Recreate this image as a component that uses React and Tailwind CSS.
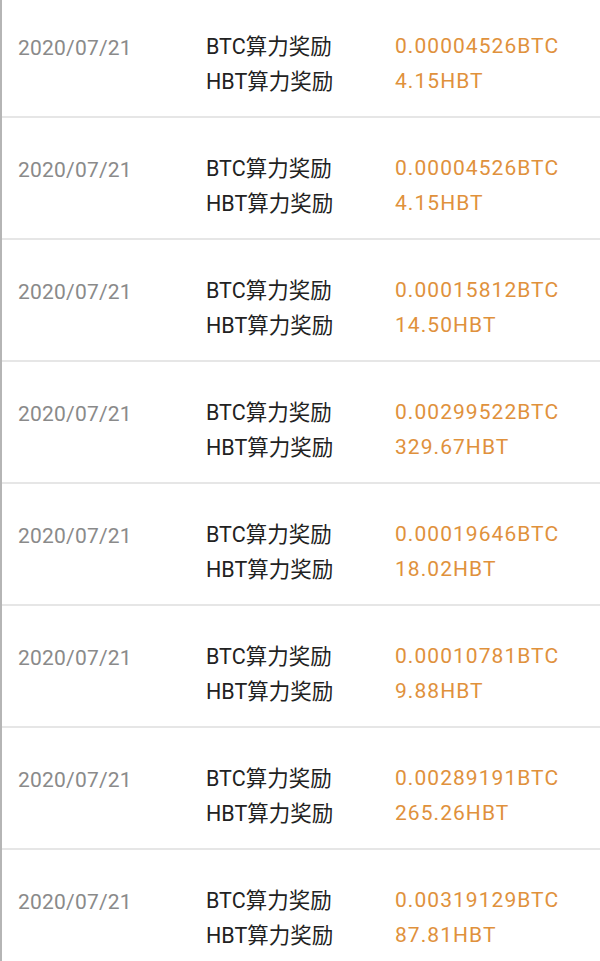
const rows = [
  ["0.00004526BTC", "4.15HBT"],
  ["0.00004526BTC", "4.15HBT"],
  ["0.00015812BTC", "14.50HBT"],
  ["0.00299522BTC", "329.67HBT"],
  ["0.00019646BTC", "18.02HBT"],
  ["0.00010781BTC", "9.88HBT"],
  ["0.00289191BTC", "265.26HBT"],
  ["0.00319129BTC", "87.81HBT"],
]

function Row({ btc, hbt }) {
  return (
    <div className="flex h-[122px] items-start border-b-2 border-[#e6e6e6] pt-[33px] pl-[16px]">
      <div className="w-[188px] pt-[2px] leading-[35px] tracking-[0.01em] text-[#8a8a8a]">2020/07/21</div>
      <div className="w-[189px] text-[21.5px] leading-[35px] text-[#222]">
        <div>BTC算力奖励</div>
        <div>HBT算力奖励</div>
      </div>
      <div className="leading-[35px] tracking-[0.05em] text-[#e0913c]">
        <div>{btc}</div>
        <div>{hbt}</div>
      </div>
    </div>
  )
}

export default function App() {
  return (
    <div
      className="h-[961px] overflow-hidden border-l-2 border-[#b5b5b5] bg-white text-[21px]"
      style={{ fontFamily: "Roboto, 'Noto Sans CJK SC', sans-serif" }}
    >
      <div className="-mt-[4px]">
        {rows.map((r, i) => (
          <Row key={i} btc={r[0]} hbt={r[1]} />
        ))}
      </div>
    </div>
  )
}
